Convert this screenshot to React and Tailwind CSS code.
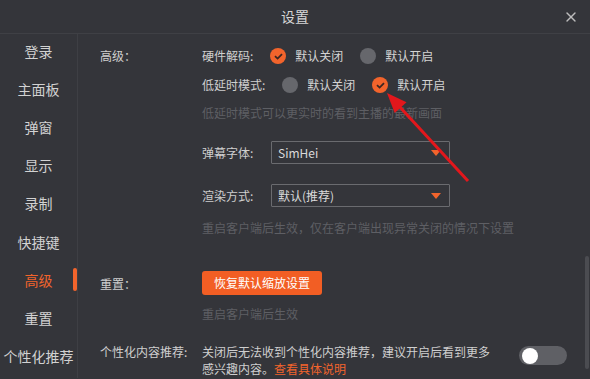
import React from 'react';
import { X } from 'lucide-react';

const FONT = { fontFamily: '"Microsoft YaHei", "Noto Sans CJK SC", "Noto Sans", sans-serif' };

const menu = ['登录', '主面板', '弹窗', '显示', '录制', '快捷键', '高级', '重置', '个性化推荐'];

function Radio({ checked, label, className = '' }) {
  return (
    <div className={`flex items-center ${className}`}>
      {checked ? (
        <span className="w-4 h-4 rounded-full bg-[#f2642c] flex items-center justify-center">
          <svg width="9" height="7" viewBox="0 0 9 7" fill="none">
            <path d="M1 3.2 L3.6 5.6 L8 1.2" stroke="#3a2622" strokeWidth="1.8" />
          </svg>
        </span>
      ) : (
        <span className="w-4 h-4 rounded-full bg-[#66676c]" />
      )}
      <span className="ml-[9px] text-[#d4d4d4]">{label}</span>
    </div>
  );
}

function Select({ value }) {
  return (
    <div className="w-[179px] h-[23px] border border-[#6a6b6f] rounded-[1px] flex items-center justify-between pl-[6px] pr-[8px]">
      <span className="text-[#dadada]">{value}</span>
      <svg width="10" height="6" viewBox="0 0 10 6">
        <path d="M0 0 L10 0 L5 6 Z" fill="#f2642c" />
      </svg>
    </div>
  );
}

export default function App() {
  return (
    <div className="w-[590px] h-[379px] bg-[#34353a] overflow-hidden relative select-none" style={FONT}>
      <div className="h-[34px] border-b border-[#3f4045] flex items-center justify-center relative">
        <span className="text-[14px] text-[#d6d6d6]">设置</span>
        <X className="absolute right-[11px] top-[9px] w-[16px] h-[16px] text-[#bdbdbd]" strokeWidth={2} />
      </div>

      <div className="flex h-[344px]">
        <div className="w-[78px] border-r border-[#3e3f44] relative shrink-0">
          <div className="-mt-[2px] flex flex-col">
            {menu.map((m) => (
              <div
                key={m}
                className={`h-[38.2px] flex items-center justify-center text-[14px] whitespace-nowrap ${
                  m === '高级' ? 'text-[#f2642c]' : 'text-[#d2d2d2]'
                }`}
              >
                {m}
              </div>
            ))}
          </div>
          <div className="absolute right-0 top-[234px] w-[4px] h-[23px] rounded-full bg-[#f2642c]" />
        </div>

        <div className="flex-1 relative text-[12px] text-[#cfcfcf]">
          <div className="pl-[22px] pt-[11px] flex">
            <div className="w-[102px] h-[22px] flex items-center">高级：</div>
            <div className="flex flex-col">
              <div className="h-[22px] flex items-center">
                <span className="mr-[17px]">硬件解码:</span>
                <Radio checked label="默认关闭" className="mr-[17px]" />
                <Radio label="默认开启" />
              </div>
              <div className="h-[22px] mt-[7px] flex items-center">
                <span className="mr-[17px]">低延时模式:</span>
                <Radio label="默认关闭" className="mr-[17px]" />
                <Radio checked label="默认开启" />
              </div>
              <div className="h-[18px] mt-[8px] flex items-center text-[#5e5f64]">
                低延时模式可以更实时的看到主播的最新画面
              </div>
              <div className="mt-[19px] flex items-center">
                <span className="w-[69px]">弹幕字体:</span>
                <Select value="SimHei" />
              </div>
              <div className="mt-[20px] flex items-center">
                <span className="w-[69px]">渲染方式:</span>
                <Select value="默认(推荐)" />
              </div>
              <div className="h-[18px] mt-[12px] flex items-center text-[#5e5f64]">
                重启客户端后生效，仅在客户端出现异常关闭的情况下设置
              </div>
            </div>
          </div>

          <div className="pl-[22px] mt-[34px] flex">
            <div className="w-[102px] h-[25px] flex items-center">重置：</div>
            <div className="flex flex-col">
              <button className="w-[120px] h-[24px] rounded-[3px] bg-[#f25e24] text-white text-[12px] flex items-center justify-center">
                恢复默认缩放设置
              </button>
              <div className="h-[18px] mt-[10px] flex items-center text-[#5e5f64]">重启客户端后生效</div>
            </div>
          </div>

          <div className="pl-[22px] mt-[20px] flex items-start">
            <div className="w-[102px] leading-[17px]">个性化内容推荐:</div>
            <div className="w-[300px] leading-[17px]">
              关闭后无法收到个性化内容推荐，建议开启后看到更多
              <br />
              感兴趣内容。<span className="text-[#f2642c]">查看具体说明</span>
            </div>
            <div className="ml-[17px] mt-[3px] w-[48px] h-[19px] rounded-full bg-[#5f6065] flex items-center pl-[3px]">
              <span className="w-[16px] h-[16px] rounded-full bg-white" />
            </div>
          </div>

          <div className="absolute right-[1px] top-[222px] w-[4px] h-[113px] rounded-[2px] bg-[#4b4c51]" />
        </div>
      </div>

      <svg className="absolute inset-0 pointer-events-none" width="590" height="379">
        <line x1="468" y1="181" x2="398" y2="105" stroke="#e3171c" strokeWidth="3" />
        <polygon points="387,93 406.5,102.3 394.7,113.1" fill="#e3171c" />
      </svg>
    </div>
  );
}
